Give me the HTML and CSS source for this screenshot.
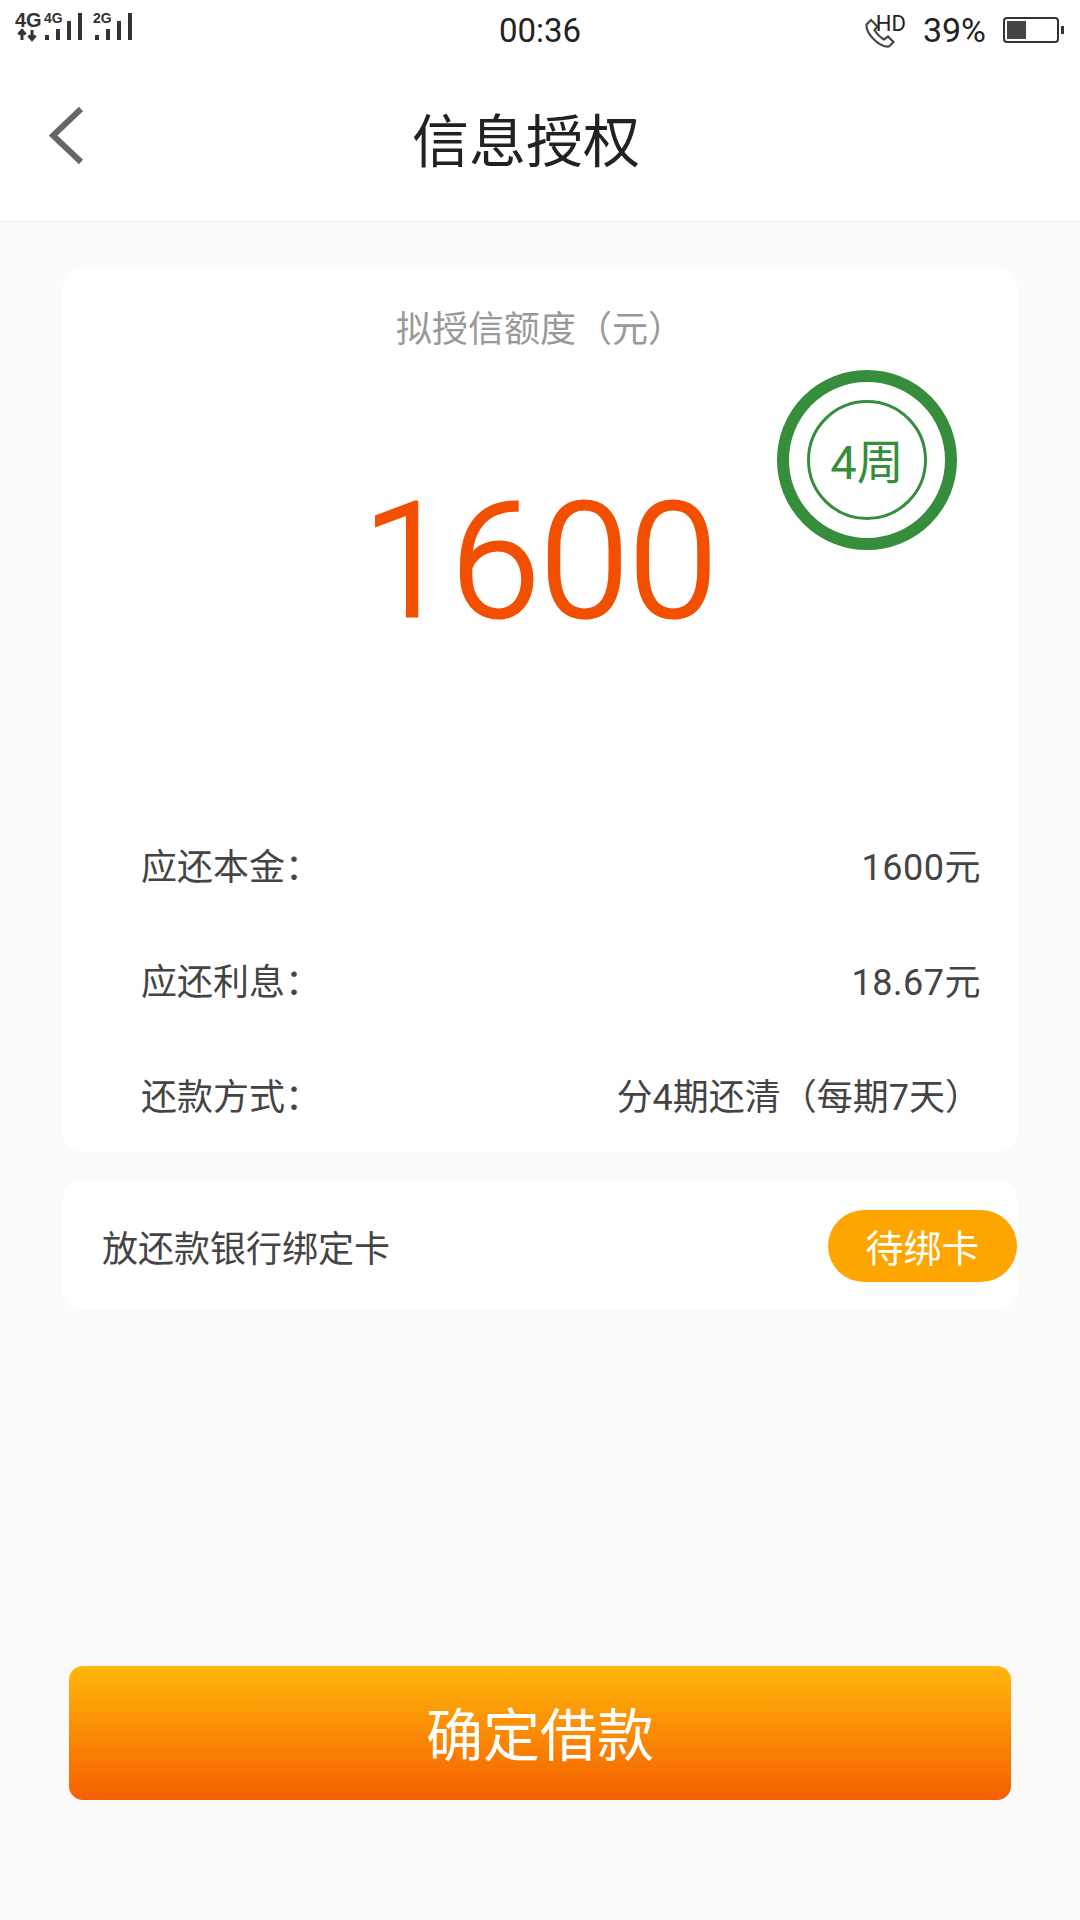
FILE: index.html
```html
<!DOCTYPE html>
<html lang="zh-CN">
<head>
    <meta charset="UTF-8">
    <meta name="viewport" content="width=device-width, initial-scale=1.0">
    <title>信息授权</title>
    <link rel="stylesheet" href="styles.css">
</head>
<body>
    <div class="page">
        <div class="status-bar">
            <div class="status-left">
                <svg class="signal-icon" width="140" height="60" viewBox="0 0 140 60">
                    <text class="net net-big" x="15" y="27">4G</text>
                    <path class="arrow" d="M22 40V33M18.500 34.500L22 30.500L25.500 34.500"/>
                    <path class="arrow" d="M32 30V37M28.500 35.500L32 39.500L35.500 35.500"/>
                    <text class="net" x="44" y="23">4G</text>
                    <rect class="bar" x="45" y="35" width="4" height="5"/>
                    <rect class="bar" x="56" y="29" width="4" height="11"/>
                    <rect class="bar" x="67" y="21" width="4" height="19"/>
                    <rect class="bar" x="78" y="13" width="4" height="27"/>
                    <text class="net" x="93" y="23">2G</text>
                    <rect class="bar" x="95" y="35" width="4" height="5"/>
                    <rect class="bar" x="106" y="29" width="4" height="11"/>
                    <rect class="bar" x="117" y="21" width="4" height="19"/>
                    <rect class="bar" x="128" y="13" width="4" height="27"/>
                </svg>
            </div>
            <div class="status-time">00:36</div>
            <div class="status-right">
                <svg class="phone-icon" width="30" height="30" viewBox="0 0 30 30">
                    <path class="phone" d="M6 2L1.500 6.500C1 12 5 18 10 22.500C15 27 20 29 24 28.500L28.500 24L23 18.500L19 21.500C15.500 19.500 12 16 9.500 12L12.500 8.500Z"/>
                </svg>
                <span class="hd">HD</span>
                <span class="battery-text">39%</span>
                <div class="battery"><div class="battery-fill"></div></div>
                <div class="battery-cap"></div>
            </div>
        </div>

        <div class="nav-bar">
            <svg class="back-icon" width="36" height="60" viewBox="0 0 36 60">
                <path d="M32 3L4 29.500L32 56"/>
            </svg>
            <h1 class="nav-title">信息授权</h1>
        </div>

        <div class="content">
            <div class="card quota-card">
                <div class="quota-label">拟授信额度（元）</div>
                <div class="quota-amount">1600</div>
                <div class="term-ring"><div class="term-inner">4周</div></div>
                <div class="quota-row"><span>应还本金：</span><span class="row-num">1600元</span></div>
                <div class="quota-row"><span>应还利息：</span><span class="row-num">18.67元</span></div>
                <div class="quota-row"><span>还款方式：</span><span>分4期还清（每期7天）</span></div>
            </div>

            <div class="card bank-card">
                <span class="bank-text">放还款银行绑定卡</span>
                <span class="bank-pill">待绑卡</span>
            </div>

            <button class="confirm-btn" type="button">确定借款</button>
        </div>
    </div>
</body>
</html>
```

FILE: styles.css
```css
* {
    box-sizing: border-box;
}

body {
    margin: 0;
    background-color: #fafafa;
    font-family: Roboto, "Noto Sans CJK SC", sans-serif;
    text-spacing-trim: space-all;
    color: #444;
}

.page {
    display: flex;
    flex-direction: column;
    min-height: 1920px;
}

/* Status bar */
.status-bar {
    display: flex;
    align-items: center;
    justify-content: space-between;
    height: 60px;
    padding-right: 16px;
    background-color: #fff;
    color: #222;
}

.status-left {
    width: 316px;
}

.status-time {
    font-size: 33px;
}

.status-right {
    display: flex;
    align-items: center;
    justify-content: flex-end;
    width: 300px;
}

.signal-icon {
    display: block;
}

.net {
    font: bold 14px "Liberation Sans", sans-serif;
    fill: #333;
}

.net-big {
    font-size: 20px;
}

.arrow {
    fill: none;
    stroke: #333;
    stroke-width: 3;
}

.bar {
    fill: #333;
}

.phone-icon {
    margin-top: 6px;
}

.phone {
    fill: none;
    stroke: #444;
    stroke-width: 2.200;
}

.hd {
    font-size: 22px;
    margin: -14px 17px 0 -19px;
}

.battery-text {
    font-size: 34px;
    margin-right: 17px;
}

.battery {
    width: 56px;
    height: 26px;
    padding: 2px;
    border: 2px solid #333;
    border-radius: 4px;
}

.battery-fill {
    width: 19px;
    height: 100%;
    background-color: #444;
}

.battery-cap {
    width: 3px;
    height: 8px;
    margin-left: 2px;
    background-color: #333;
}

/* Nav bar */
.nav-bar {
    position: relative;
    display: flex;
    align-items: center;
    justify-content: center;
    height: 162px;
    padding-bottom: 8px;
    background-color: #fff;
    border-bottom: 1px solid #eee;
}

.back-icon {
    position: absolute;
    left: 49px;
    top: 46px;
}

.back-icon path {
    fill: none;
    stroke: #666;
    stroke-width: 6;
}

.nav-title {
    margin: 0 28px 0 0;
    font-size: 57px;
    font-weight: 400;
    color: #222;
}

/* Content */
.content {
    flex: 1;
    display: flex;
    flex-direction: column;
    padding: 45px 63px 120px;
}

.card {
    background-color: #fff;
    border-radius: 18px;
}

.quota-card {
    position: relative;
    height: 884px;
    padding-top: 38px;
}

.quota-label {
    text-align: center;
    font-size: 36px;
    line-height: 50px;
    color: #999;
}

.quota-amount {
    margin-top: 112px;
    text-align: center;
    font-size: 160px;
    font-weight: 300;
    -webkit-text-stroke: 3px #f25000;
    line-height: 190px;
    color: #f25000;
}

.term-ring {
    position: absolute;
    left: 714px;
    top: 103px;
    display: flex;
    align-items: center;
    justify-content: center;
    width: 180px;
    height: 180px;
    border: 12px solid #368e3c;
    border-radius: 50%;
}

.term-inner {
    display: flex;
    align-items: center;
    justify-content: center;
    width: 120px;
    height: 120px;
    padding-bottom: 4px;
    border: 3px solid #368e3c;
    border-radius: 50%;
    font-size: 47px;
    color: #368e3c;
}

.quota-row {
    display: flex;
    align-items: center;
    justify-content: space-between;
    height: 115px;
    padding: 0 36px 0 78px;
    font-size: 36px;
}

.quota-amount + .term-ring + .quota-row {
    margin-top: 149px;
}

.row-num {
    letter-spacing: 0.5px;
}

.bank-card {
    display: flex;
    align-items: center;
    justify-content: space-between;
    height: 129px;
    margin-top: 30px;
    padding-left: 39px;
    font-size: 36px;
}

.bank-pill {
    display: flex;
    align-items: center;
    justify-content: center;
    width: 189px;
    height: 72px;
    border-radius: 36px;
    background-color: #ffa500;
    color: #fff;
    font-size: 38px;
}

.confirm-btn {
    width: 942px;
    height: 134px;
    margin: auto 0 0 6px;
    padding-bottom: 6px;
    border: none;
    border-radius: 14px;
    background: linear-gradient(#ffb70a, #f55f00);
    color: #fff;
    font-family: inherit;
    font-size: 57px;
}
```
